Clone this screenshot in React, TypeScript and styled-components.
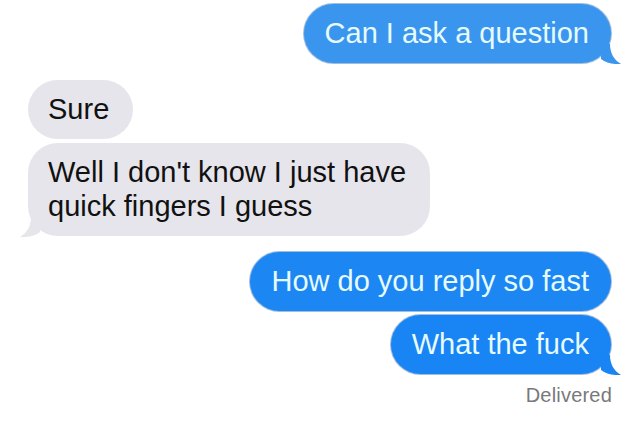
import styled, { createGlobalStyle } from "styled-components";

const GlobalStyle = createGlobalStyle`
  html, body {
    margin: 0;
    padding: 0;
    background: #ffffff;
  }
  body {
    font-family: "Liberation Sans", Arial, Helvetica, sans-serif;
  }
`;

const Thread = styled.div`
  width: 640px;
  height: 443px;
  box-sizing: border-box;
  padding: 4px 29px 0 28px;
  display: flex;
  flex-direction: column;
  overflow: hidden;
  background: #ffffff;
`;

const Row = styled.div<{ $side: "left" | "right"; $gap: number }>`
  display: flex;
  justify-content: ${(p) => (p.$side === "right" ? "flex-end" : "flex-start")};
  margin-top: ${(p) => p.$gap}px;
`;

const Bubble = styled.div<{ $side: "left" | "right"; $tone?: string }>`
  position: relative;
  box-sizing: border-box;
  padding: 12px 22px 13px 21px;
  border-radius: 30px;
  font-size: 29px;
  line-height: 34px;
  background: ${(p) =>
    p.$side === "right" ? p.$tone ?? "#1f88f2" : "#e6e5eb"};
  color: ${(p) => (p.$side === "right" ? "#e6fbff" : "#111111")};
  box-shadow: ${(p) =>
    p.$side === "right" ? "0 0 0 1px rgba(20, 90, 170, 0.4)" : "none"};
  ${(p) => p.$side === "left" && "padding: 12px 24px 13px 20px;"}
`;

const Tail = styled.svg<{ $side: "left" | "right" }>`
  position: absolute;
  bottom: -1px;
  width: 20px;
  height: 20px;
  ${(p) =>
    p.$side === "right"
      ? "right: -10px;"
      : "left: -8px; transform: scaleX(-1);"}
`;

const Status = styled.div`
  align-self: flex-end;
  margin-top: 10px;
  margin-right: -1px;
  font-size: 20px;
  color: #78787d;
  letter-spacing: 0.2px;
`;

type Msg = {
  side: "left" | "right";
  text: string[];
  gap: number;
  tail?: boolean;
  tone?: string;
};

const messages: Msg[] = [
  { side: "right", text: ["Can I ask a question"], gap: 0, tail: true, tone: "#3a95ee" },
  { side: "left", text: ["Sure"], gap: 17 },
  {
    side: "left",
    text: ["Well I don't know I just have", "quick fingers I guess"],
    gap: 4,
    tail: true,
  },
  { side: "right", text: ["How do you reply so fast"], gap: 16, tone: "#1c86f3" },
  { side: "right", text: ["What the fuck"], gap: 4, tail: true, tone: "#1984f3" },
];

const TailShape = ({ side, color }: { side: "left" | "right"; color: string }) => (
  <Tail $side={side} viewBox="0 0 20 20">
    <path d="M0 0 L9 0 C9 9 13 16 20 20 C12 20.5 5 19 0 15 Z" fill={color} />
  </Tail>
);

export default function App() {
  return (
    <>
      <GlobalStyle />
      <Thread>
        {messages.map((m, i) => (
          <Row key={i} $side={m.side} $gap={m.gap}>
            <Bubble $side={m.side} $tone={m.tone}>
              {m.text.map((line, j) => (
                <div key={j}>{line}</div>
              ))}
              {m.tail && (
                <TailShape
                  side={m.side}
                  color={m.side === "right" ? m.tone ?? "#1f88f2" : "#e6e5eb"}
                />
              )}
            </Bubble>
          </Row>
        ))}
        <Status>Delivered</Status>
      </Thread>
    </>
  );
}
